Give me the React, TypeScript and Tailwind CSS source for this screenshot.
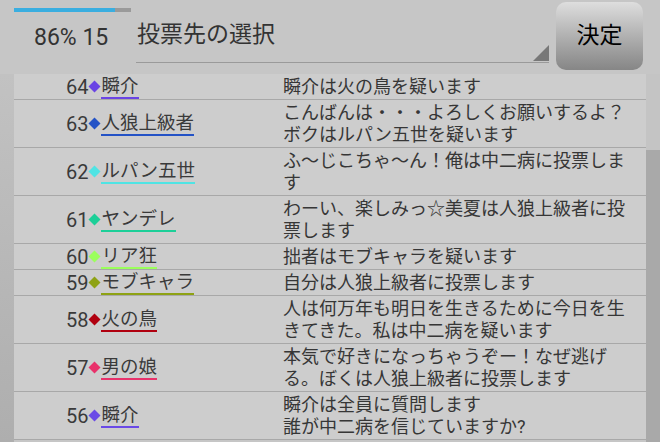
import React from 'react';

type Row = {
  no: number;
  name: string;
  color: string;
  text: string;
};

const ROWS: Row[] = [
  { no: 64, name: '瞬介', color: '#6a44e4', text: '瞬介は火の鳥を疑います' },
  { no: 63, name: '人狼上級者', color: '#2352c6', text: 'こんばんは・・・よろしくお願いするよ？ボクはルパン五世を疑います' },
  { no: 62, name: 'ルパン五世', color: '#4fe4e4', text: 'ふ～じこちゃ～ん！俺は中二病に投票します' },
  { no: 61, name: 'ヤンデレ', color: '#1ccf98', text: 'わーい、楽しみっ☆美夏は人狼上級者に投票します' },
  { no: 60, name: 'リア狂', color: '#9bff5c', text: '拙者はモブキャラを疑います' },
  { no: 59, name: 'モブキャラ', color: '#8ea214', text: '自分は人狼上級者に投票します' },
  { no: 58, name: '火の鳥', color: '#b0000f', text: '人は何万年も明日を生きるために今日を生きてきた。私は中二病を疑います' },
  { no: 57, name: '男の娘', color: '#e8326b', text: '本気で好きになっちゃうぞー！なぜ逃げる。ぼくは人狼上級者に投票します' },
  { no: 56, name: '瞬介', color: '#6a4ae6', text: '瞬介は全員に質問します\n誰が中二病を信じていますか?' },
];

function Diamond({ color }: { color: string }) {
  return (
    <svg width="13" height="13" viewBox="0 0 13 13" className="shrink-0">
      <path d="M6.5 0.5 L12.5 6.5 L6.5 12.5 L0.5 6.5 Z" fill={color} />
    </svg>
  );
}

function LogRow({ row }: { row: Row }) {
  return (
    <div className="flex border-b border-[#a8a8a8] bg-[#cdcdcd]">
      <div className="flex w-[269px] shrink-0 items-center pl-[52px] text-[#3a3a3a]">
        <span className="text-[20px] leading-[22px]">{row.no}</span>
        <Diamond color={row.color} />
        <span
          className="border-b-2 text-[18.5px] leading-[22px]"
          style={{ borderColor: row.color }}
        >
          {row.name}
        </span>
      </div>
      <div className="w-[350px] whitespace-pre-line pt-[2px] pb-[1px] text-[18px] leading-[22px] text-[#363636]">
        {row.text}
      </div>
    </div>
  );
}

export default function App() {
  return (
    <div
      className="flex h-[442px] w-[660px] flex-col overflow-hidden bg-[#c6c6c6]"
      style={{ fontFamily: 'Roboto, "Noto Sans CJK JP", sans-serif' }}
    >
      {/* header */}
      <div className="flex h-[74px] shrink-0 pl-[14px]">
        <div className="w-[117px] shrink-0">
          <div className="mt-[8px] flex h-[4px]">
            <div className="w-[101px] bg-[#3aaee0]" />
            <div className="flex-1 bg-[#9a9a9a]" />
          </div>
          <div className="mt-[12px] pl-[20px] text-[23px] leading-[28px] text-[#333]">86% 15</div>
        </div>
        <div className="ml-[5px] flex h-[63px] w-[413px] shrink-0 items-end border-b-[1.5px] border-[#9a9a9a]">
          <div className="mb-[13px] flex-1 pl-[1px] text-[23px] leading-[28px] text-[#333]">投票先の選択</div>
          <svg width="16" height="16" viewBox="0 0 16 16" className="mb-[1px]">
            <path d="M16 0 L16 16 L0 16 Z" fill="#787878" />
          </svg>
        </div>
        <div className="ml-[7px] mt-[2px] flex h-[68px] w-[87px] items-center justify-center rounded-[10px] bg-gradient-to-b from-[#dedede] to-[#868686] text-[23px] text-black">
          決定
        </div>
      </div>

      {/* list */}
      <div className="flex flex-1">
        <div className="w-[14px] shrink-0 bg-gradient-to-b from-[#c2c2c2] to-[#aeaeae]" />
        <div className="w-[632px] shrink-0">
          {ROWS.map((r, i) => (
            <LogRow key={i} row={r} />
          ))}
        </div>
        <div className="flex w-[14px] shrink-0 flex-col">
          <div className="h-[76px] bg-[#c4c4c4]" />
          <div className="flex-1 bg-[#a9a9a9]" />
        </div>
      </div>
    </div>
  );
}
